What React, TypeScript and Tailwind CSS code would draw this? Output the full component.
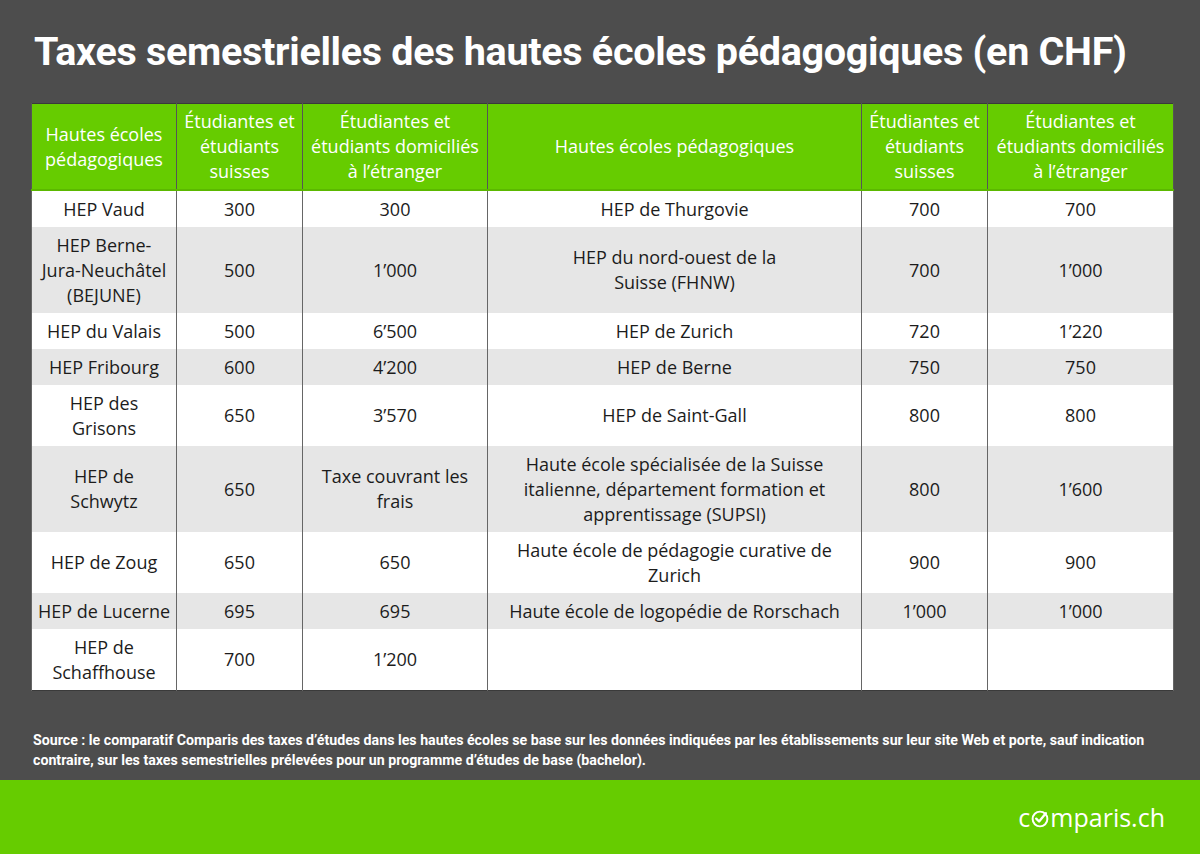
import React from 'react'

type Row = { name: string; ch: string; abroad: string; name2: string; ch2: string; abroad2: string }

const rows: Row[] = [
  { name: 'HEP Vaud', ch: '300', abroad: '300', name2: 'HEP de Thurgovie', ch2: '700', abroad2: '700' },
  { name: 'HEP Berne-\nJura-Neuchâtel\n(BEJUNE)', ch: '500', abroad: '1’000', name2: 'HEP du nord-ouest de la\nSuisse (FHNW)', ch2: '700', abroad2: '1’000' },
  { name: 'HEP du Valais', ch: '500', abroad: '6’500', name2: 'HEP de Zurich', ch2: '720', abroad2: '1’220' },
  { name: 'HEP Fribourg', ch: '600', abroad: '4’200', name2: 'HEP de Berne', ch2: '750', abroad2: '750' },
  { name: 'HEP des\nGrisons', ch: '650', abroad: '3’570', name2: 'HEP de Saint-Gall', ch2: '800', abroad2: '800' },
  { name: 'HEP de\nSchwytz', ch: '650', abroad: 'Taxe couvrant les\nfrais', name2: 'Haute école spécialisée de la Suisse\nitalienne, département formation et\napprentissage (SUPSI)', ch2: '800', abroad2: '1’600' },
  { name: 'HEP de Zoug', ch: '650', abroad: '650', name2: 'Haute école de pédagogie curative de\nZurich', ch2: '900', abroad2: '900' },
  { name: 'HEP de Lucerne', ch: '695', abroad: '695', name2: 'Haute école de logopédie de Rorschach', ch2: '1’000', abroad2: '1’000' },
  { name: 'HEP de\nSchaffhouse', ch: '700', abroad: '1’200', name2: '', ch2: '', abroad2: '' },
]

const headers = [
  'Hautes écoles\npédagogiques',
  'Étudiantes et\nétudiants\nsuisses',
  'Étudiantes et\nétudiants domiciliés\nà l’étranger',
  'Hautes écoles pédagogiques',
  'Étudiantes et\nétudiants\nsuisses',
  'Étudiantes et\nétudiants domiciliés\nà l’étranger',
]

const widths = ['w-[145px]', 'w-[126px]', 'w-[185px]', 'w-[374px]', 'w-[126px]', 'w-[186px]']

function Logo() {
  return (
    <div className="flex items-center text-white text-[25px] leading-none font-['Open_Sans',sans-serif]">
      <span>c</span>
      <svg width="18" height="18" viewBox="0 0 20 20" className="mx-[1px] mt-[3px]">
        <circle cx="10" cy="10" r="8.2" fill="none" stroke="white" strokeWidth="2.2" />
        <path d="M5.8 9.6 L9 12.8 L16.5 3.5" fill="none" stroke="white" strokeWidth="2.6" strokeLinecap="round" strokeLinejoin="round" />
      </svg>
      <span>mparis.ch</span>
    </div>
  )
}

export default function App() {
  return (
    <div className="w-[1200px] h-[854px] flex flex-col bg-[#4d4d4d]">
      <div className="flex-1 px-[31px] pt-[27px]">
        <h1 className="font-['Roboto',sans-serif] font-bold text-white text-[39.5px] leading-[50px] tracking-[-0.3px] pl-[3px] whitespace-nowrap">
          Taxes semestrielles des hautes écoles pédagogiques (en CHF)
        </h1>

        <table className="mt-[26px] w-[1142px] table-fixed border-collapse border border-[#3a3a3a] font-['Open_Sans',sans-serif] text-[18px] leading-[25px] text-[#1c1c1c]">
          <thead>
            <tr className="bg-[#66cc00] text-white">
              {headers.map((h, i) => (
                <th key={i} className={`${widths[i]} font-normal whitespace-pre-line text-center px-1 py-[5px] border-x border-[#555] border-b-2 border-b-[#5bb800]`}>
                  {h}
                </th>
              ))}
            </tr>
          </thead>
          <tbody>
            {rows.map((r, i) => (
              <tr key={i} className={i % 2 === 0 ? 'bg-white' : 'bg-[#e6e6e6]'}>
                {[r.name, r.ch, r.abroad, r.name2, r.ch2, r.abroad2].map((c, j) => (
                  <td key={j} className="whitespace-pre-line text-center px-1 py-[5.5px] border-x border-[#666]">
                    {c}
                  </td>
                ))}
              </tr>
            ))}
          </tbody>
        </table>

        <p className="mt-[39px] pl-[2px] font-['Roboto',sans-serif] font-bold text-white text-[14.2px] leading-[20px] whitespace-nowrap">
          Source : le comparatif Comparis des taxes d’études dans les hautes écoles se base sur les données indiquées par les établissements sur leur site Web et porte, sauf indication
          <br />
          contraire, sur les taxes semestrielles prélevées pour un programme d’études de base (bachelor).
        </p>
      </div>

      <div className="h-[74px] bg-[#66cc00] flex items-center justify-end pr-[35px]">
        <Logo />
      </div>
    </div>
  )
}
